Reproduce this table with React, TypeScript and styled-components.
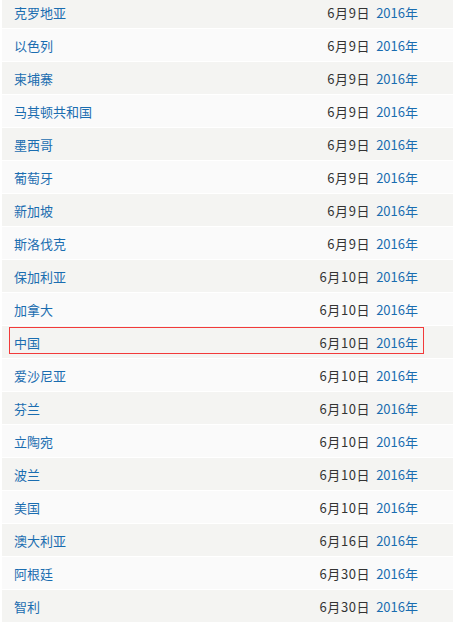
import React from "react";
import styled, { createGlobalStyle } from "styled-components";

const GlobalStyle = createGlobalStyle`
  html, body {
    margin: 0;
    padding: 0;
    background: #ffffff;
    overflow: hidden;
  }
`;

const List = styled.ul`
  list-style: none;
  margin: -4px 0 0 2px;
  padding: 0;
  width: 460px;
  font-family: "Noto Sans CJK SC", "Liberation Sans", sans-serif;
  font-size: 13px;
`;

const Row = styled.li<{ $odd: boolean }>`
  background: ${(p) => (p.$odd ? "#fafafa" : "#f4f4f2")};
  padding: 1px 38px 4px 7px;
  margin-bottom: 1px;
`;

const Cell = styled.div<{ $marked: boolean }>`
  display: flex;
  align-items: center;
  justify-content: space-between;
  height: 22px;
  padding: 3px 5px 0 4px;
  border: 1px solid transparent;
  ${(p) => p.$marked && "border-color: #f23a3a;"}
`;

const Country = styled.a`
  color: #1a6db0;
  text-decoration: none;
`;

const DateText = styled.span`
  color: #333333;
  letter-spacing: 0.6px;
`;

const Year = styled.span`
  color: #1a6db0;
  margin-left: 6px;
`;

const rows: [string, string][] = [
  ["克罗地亚", "6月9日"],
  ["以色列", "6月9日"],
  ["柬埔寨", "6月9日"],
  ["马其顿共和国", "6月9日"],
  ["墨西哥", "6月9日"],
  ["葡萄牙", "6月9日"],
  ["新加坡", "6月9日"],
  ["斯洛伐克", "6月9日"],
  ["保加利亚", "6月10日"],
  ["加拿大", "6月10日"],
  ["中国", "6月10日"],
  ["爱沙尼亚", "6月10日"],
  ["芬兰", "6月10日"],
  ["立陶宛", "6月10日"],
  ["波兰", "6月10日"],
  ["美国", "6月10日"],
  ["澳大利亚", "6月16日"],
  ["阿根廷", "6月30日"],
  ["智利", "6月30日"],
];

const App = () => {
  return (
    <>
      <GlobalStyle />
      <List>
        {rows.map(([name, date], i) => (
          <Row key={name} $odd={i % 2 === 1}>
            <Cell $marked={name === "中国"}>
              <Country href="#">{name}</Country>
              <span>
                <DateText>{date}</DateText>
                <Year>2016年</Year>
              </span>
            </Cell>
          </Row>
        ))}
      </List>
    </>
  );
};

export default App;
